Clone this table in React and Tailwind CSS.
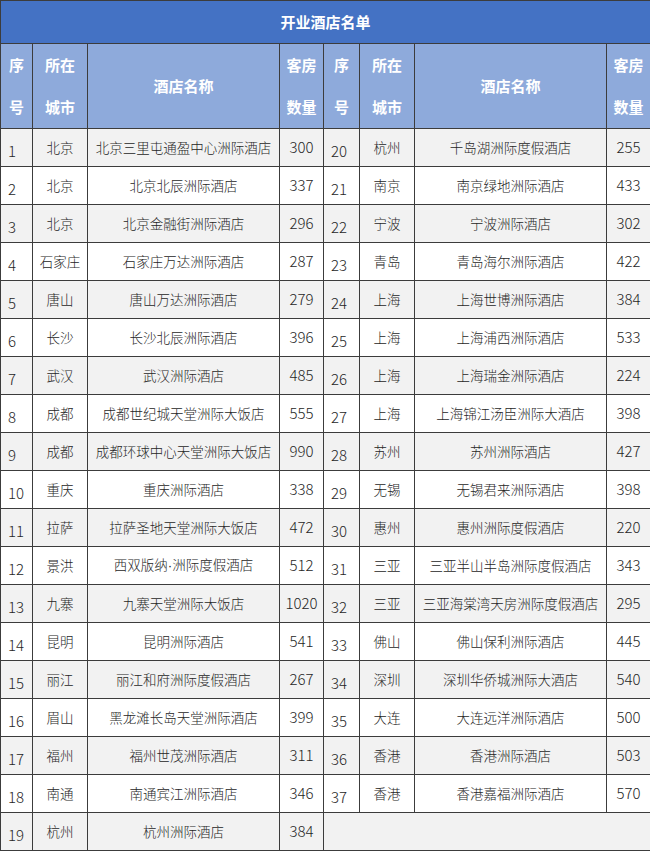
const left = [
  [1, "北京", "北京三里屯通盈中心洲际酒店", 300],
  [2, "北京", "北京北辰洲际酒店", 337],
  [3, "北京", "北京金融街洲际酒店", 296],
  [4, "石家庄", "石家庄万达洲际酒店", 287],
  [5, "唐山", "唐山万达洲际酒店", 279],
  [6, "长沙", "长沙北辰洲际酒店", 396],
  [7, "武汉", "武汉洲际酒店", 485],
  [8, "成都", "成都世纪城天堂洲际大饭店", 555],
  [9, "成都", "成都环球中心天堂洲际大饭店", 990],
  [10, "重庆", "重庆洲际酒店", 338],
  [11, "拉萨", "拉萨圣地天堂洲际大饭店", 472],
  [12, "景洪", "西双版纳·洲际度假酒店", 512],
  [13, "九寨", "九寨天堂洲际大饭店", 1020],
  [14, "昆明", "昆明洲际酒店", 541],
  [15, "丽江", "丽江和府洲际度假酒店", 267],
  [16, "眉山", "黑龙滩长岛天堂洲际酒店", 399],
  [17, "福州", "福州世茂洲际酒店", 311],
  [18, "南通", "南通宾江洲际酒店", 346],
  [19, "杭州", "杭州洲际酒店", 384],
];

const right = [
  [20, "杭州", "千岛湖洲际度假酒店", 255],
  [21, "南京", "南京绿地洲际酒店", 433],
  [22, "宁波", "宁波洲际酒店", 302],
  [23, "青岛", "青岛海尔洲际酒店", 422],
  [24, "上海", "上海世博洲际酒店", 384],
  [25, "上海", "上海浦西洲际酒店", 533],
  [26, "上海", "上海瑞金洲际酒店", 224],
  [27, "上海", "上海锦江汤臣洲际大酒店", 398],
  [28, "苏州", "苏州洲际酒店", 427],
  [29, "无锡", "无锡君来洲际酒店", 398],
  [30, "惠州", "惠州洲际度假酒店", 220],
  [31, "三亚", "三亚半山半岛洲际度假酒店", 343],
  [32, "三亚", "三亚海棠湾天房洲际度假酒店", 295],
  [33, "佛山", "佛山保利洲际酒店", 445],
  [34, "深圳", "深圳华侨城洲际大酒店", 540],
  [35, "大连", "大连远洋洲际酒店", 500],
  [36, "香港", "香港洲际酒店", 503],
  [37, "香港", "香港嘉福洲际酒店", 570],
];

const cell = "border border-[#3c3c3c] p-0 font-light";
const head = "border border-[#3c3c3c] p-0 text-center align-middle font-bold text-white text-[15px]";

// the middle dot is narrow in the original, not the full-width CJK one
const Name = ({ text }) => {
  const parts = text.split("·");
  if (parts.length === 1) return text;
  return (
    <>
      {parts[0]}
      <span className="font-['Liberation_Sans']">·</span>
      {parts[1]}
    </>
  );
};

const DataCells = ({ row }) => (
  <>
    <td className={`${cell} align-bottom text-left pl-[7px] pb-[5px] text-[15px] leading-[20px]`}>{row[0]}</td>
    <td className={`${cell} text-center align-middle text-[13.5px]`}>{row[1]}</td>
    <td className={`${cell} text-center align-middle text-[13.5px] whitespace-nowrap`}>
      <Name text={row[2]} />
    </td>
    <td className={`${cell} text-center align-middle text-[15px]`}>{row[3]}</td>
  </>
);

const HeadCells = () => (
  <>
    <th className={`${head} leading-[42px]`}>序<br />号</th>
    <th className={`${head} leading-[42px]`}>所在<br />城市</th>
    <th className={head}>酒店名称</th>
    <th className={`${head} leading-[42px]`}>客房<br />数量</th>
  </>
);

export default function App() {
  return (
    <div className="w-[650px] bg-white" style={{ fontFamily: '"Noto Sans CJK SC", "Microsoft YaHei", sans-serif' }}>
      <table className="w-[650px] table-fixed border-collapse text-[#262626]">
        <colgroup>
          <col className="w-[32px]" />
          <col className="w-[55px]" />
          <col className="w-[192px]" />
          <col className="w-[44px]" />
          <col className="w-[36px]" />
          <col className="w-[55px]" />
          <col className="w-[192px]" />
          <col className="w-[44px]" />
        </colgroup>
        <thead>
          <tr className="h-[43px] bg-[#4472c4]">
            <th colSpan={8} className={head}>开业酒店名单</th>
          </tr>
          <tr className="h-[85px] bg-[#8eaadb]">
            <HeadCells />
            <HeadCells />
          </tr>
        </thead>
        <tbody>
          {left.map((row, i) => (
            <tr key={row[0]} className={`h-[38px] ${i % 2 === 0 ? "bg-[#f2f2f2]" : "bg-white"}`}>
              <DataCells row={row} />
              {right[i] ? (
                <DataCells row={right[i]} />
              ) : (
                <td colSpan={4} className={cell}></td>
              )}
            </tr>
          ))}
        </tbody>
      </table>
    </div>
  );
}
